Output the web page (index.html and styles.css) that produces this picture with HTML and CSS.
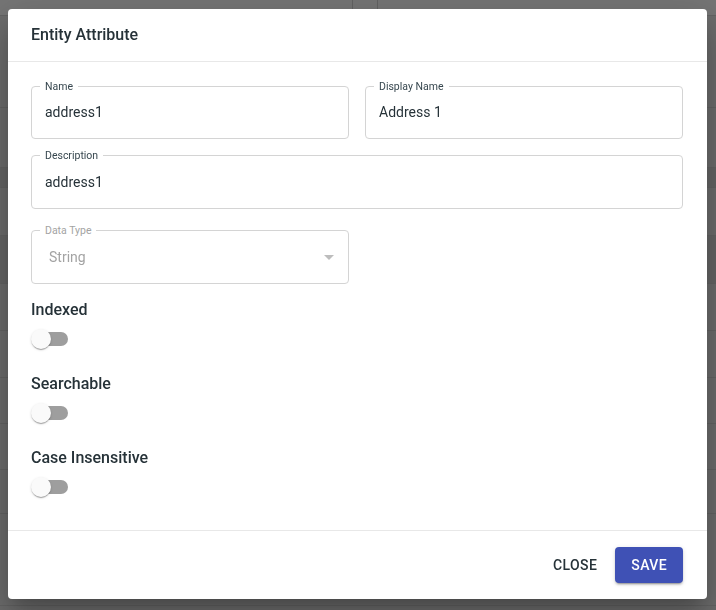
FILE: index.html
```html
<!DOCTYPE html>
<html lang="en">
<head>
    <meta charset="UTF-8">
    <meta name="viewport" content="width=device-width, initial-scale=1.0">
    <title>Entity Attribute</title>
    <link rel="stylesheet" href="styles.css">
</head>
<body>
    <div class="page">
        <div class="page-row row-top"><span class="cell"></span><span class="cell"></span></div>
        <div class="page-row row-92"></div>
        <div class="page-row row-60"></div>
        <div class="page-row row-20 row-dark"></div>
        <div class="page-row row-48"></div>
        <div class="page-row row-48 row-dark"></div>
        <div class="page-row row-47"></div>
        <div class="page-row row-47"></div>
        <div class="page-row row-46"></div>
        <div class="page-row row-46"></div>
        <div class="page-row row-44"></div>
        <div class="page-row row-92"></div>
    </div>

    <div class="backdrop">
        <div class="dialog">
            <div class="dialog-title">Entity Attribute</div>

            <div class="dialog-content">
                <div class="field-grid">
                    <div class="field">
                        <span class="field-label">Name</span>
                        <div class="field-value">address1</div>
                    </div>
                    <div class="field">
                        <span class="field-label">Display Name</span>
                        <div class="field-value">Address 1</div>
                    </div>
                    <div class="field field-wide">
                        <span class="field-label">Description</span>
                        <div class="field-value">address1</div>
                    </div>
                    <div class="field field-select field-disabled">
                        <span class="field-label">Data Type</span>
                        <div class="field-value">String</div>
                        <svg class="select-arrow" viewBox="0 0 24 24" width="24" height="24"><path d="M7 10l5 5 5-5z"/></svg>
                    </div>
                </div>

                <div class="toggle-group">
                    <div class="toggle-label">Indexed</div>
                    <span class="switch"><span class="switch-track"></span><span class="switch-thumb"></span></span>
                </div>
                <div class="toggle-group">
                    <div class="toggle-label">Searchable</div>
                    <span class="switch"><span class="switch-track"></span><span class="switch-thumb"></span></span>
                </div>
                <div class="toggle-group">
                    <div class="toggle-label">Case Insensitive</div>
                    <span class="switch"><span class="switch-track"></span><span class="switch-thumb"></span></span>
                </div>
            </div>

            <div class="dialog-actions">
                <button class="btn btn-text">Close</button>
                <button class="btn btn-primary">Save</button>
            </div>
        </div>
    </div>
</body>
</html>
```

FILE: styles.css
```css
body {
    margin: 0;
    font-family: Roboto, "Liberation Sans", Arial, sans-serif;
    background: #6d6d6d;
    overflow: hidden;
}

/* page behind the modal */
.page {
    width: 716px;
}
.page-row {
    border-bottom: 1px solid #646464;
    box-sizing: border-box;
}
.row-top {
    height: 16px;
    background: #767676;
    display: flex;
    padding-left: 352px;
}
.row-top .cell {
    width: 24px;
    border-left: 1px solid #636363;
}
.row-92 { height: 92px; }
.row-60 { height: 60px; }
.row-20 { height: 20px; }
.row-48 { height: 48px; }
.row-47 { height: 47px; }
.row-46 { height: 46px; }
.row-44 { height: 44px; }
.row-dark { background: #666666; }

.backdrop {
    position: fixed;
    top: 0;
    left: 0;
    width: 100vw;
    height: 100vh;
    display: flex;
    align-items: flex-start;
    justify-content: flex-start;
    padding: 9px 0 0 8px;
    box-sizing: border-box;
}

.dialog {
    width: 699px;
    background: #fff;
    border-radius: 4px;
    box-shadow: 0 11px 15px -7px rgba(0,0,0,0.2), 0 24px 38px 3px rgba(0,0,0,0.14), 0 9px 46px 8px rgba(0,0,0,0.12);
    color: #263238;
}

.dialog-title {
    padding: 16px 23px;
    font-size: 16px;
    font-weight: 500;
    line-height: 20px;
    border-bottom: 1px solid #e8e8e8;
}

.dialog-content {
    padding: 24px 24px 24px 23px;
}

.field-grid {
    display: grid;
    grid-template-columns: 318px 318px;
    column-gap: 16px;
    row-gap: 16px;
    margin-bottom: 14px;
}

.field {
    position: relative;
    height: 53px;
    border: 1px solid #d4d4d4;
    border-radius: 4px;
    box-sizing: border-box;
    display: flex;
    align-items: center;
    padding: 0 13px;
}
.field-wide {
    grid-column: 1 / 3;
    height: 54px;
}
.field-select {
    margin-top: 5px;
    height: 54px;
    padding-left: 17px;
}

.field-label {
    position: absolute;
    top: -7px;
    left: 8px;
    padding: 0 5px;
    background: #fff;
    font-size: 10.5px;
    line-height: 13px;
    color: #37474f;
}

.field-value {
    font-size: 14px;
    color: #263238;
    padding-bottom: 1px;
}

.field-disabled .field-label,
.field-disabled .field-value {
    color: #a3a3a3;
}

.select-arrow {
    position: absolute;
    right: 7px;
    top: 14px;
    fill: #bdbdbd;
}

.toggle-group {
    padding-bottom: 14px;
}
.toggle-group:last-child {
    padding-bottom: 0;
}

.toggle-label {
    font-size: 16px;
    font-weight: 500;
    line-height: 21px;
    padding-top: 1px;
    color: #263238;
}

.switch {
    position: relative;
    display: block;
    width: 38px;
    height: 20px;
    margin: 9px 0;
}
.switch-track {
    position: absolute;
    left: 3px;
    top: 3px;
    width: 34px;
    height: 14px;
    border-radius: 7px;
    background: #9e9e9e;
}
.switch-thumb {
    position: absolute;
    left: 0;
    top: 0;
    width: 20px;
    height: 20px;
    border-radius: 50%;
    background: #fafafa;
    box-shadow: 0 2px 1px -1px rgba(0,0,0,0.2), 0 1px 1px 0 rgba(0,0,0,0.14), 0 1px 3px 0 rgba(0,0,0,0.12);
}

.dialog-actions {
    border-top: 1px solid #e8e8e8;
    padding: 16px 24px;
    display: flex;
    justify-content: flex-end;
    align-items: center;
}

.btn {
    font-family: Roboto, "Liberation Sans", Arial, sans-serif;
    font-size: 14px;
    font-weight: 500;
    letter-spacing: 0.4px;
    text-transform: uppercase;
    height: 36px;
    border: none;
    border-radius: 4px;
    cursor: pointer;
}
.btn-text {
    background: transparent;
    color: #263238;
    padding: 0 8px;
    margin-right: 10px;
}
.btn-primary {
    background: #3f51b5;
    color: #fff;
    padding: 0 16px;
    box-shadow: 0 3px 1px -2px rgba(0,0,0,0.2), 0 2px 2px 0 rgba(0,0,0,0.14), 0 1px 5px 0 rgba(0,0,0,0.12);
}
```
